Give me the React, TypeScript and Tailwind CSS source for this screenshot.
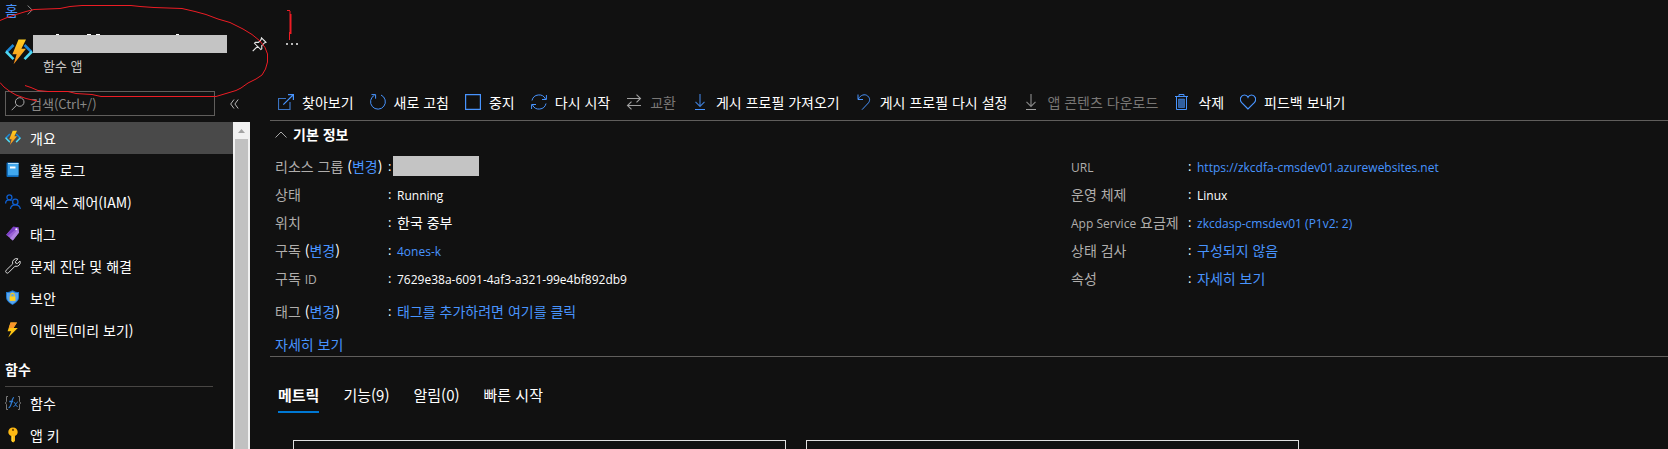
import type { ReactNode } from "react";

const KR = "font-['Noto_Sans_CJK_KR','Open_Sans',sans-serif]";

/** Sets Latin runs inside Korean text in the Latin face, one size smaller, so both scripts look even. */
function Mixed({ text }: { text: string }) {
  const parts = text.split(/([A-Za-z0-9](?:[A-Za-z0-9:/.\- (]*[A-Za-z0-9]\)?)?)/);
  return (
    <>
      {parts.map((part, i) =>
        i % 2 === 1 ? (
          <span key={i} className="font-['Open_Sans',sans-serif] text-xs">
            {part}
          </span>
        ) : (
          part
        ),
      )}
    </>
  );
}

function Svg({ children, size = 16, className = "" }: { children: ReactNode; size?: number; className?: string }) {
  return (
    <svg
      width={size}
      height={size}
      viewBox="0 0 16 16"
      fill="none"
      stroke="currentColor"
      className={"shrink-0 " + className}
      aria-hidden="true"
    >
      {children}
    </svg>
  );
}

function FunctionAppIcon({ size, id }: { size: number; id: string }) {
  return (
    <svg width={size} height={size} viewBox="0 0 28 28" className="shrink-0" aria-hidden="true">
      <defs>
        <linearGradient id={id} x1="0" y1="0" x2="0" y2="1">
          <stop offset="0" stopColor="#ffce1f" />
          <stop offset="1" stopColor="#f78d1e" />
        </linearGradient>
      </defs>
      <path d="M8.5 7 1.4 14.2" stroke="#1a87d8" strokeWidth="2.600" fill="none" />
      <path d="M1 13.5 8.5 21.2" stroke="#4fd8f2" strokeWidth="2.600" fill="none" />
      <path d="M19.5 7 26.6 14.2" stroke="#1a87d8" strokeWidth="2.600" fill="none" />
      <path d="M27 13.5 19.5 21.2" stroke="#4fd8f2" strokeWidth="2.600" fill="none" />
      <path d="M13.5 1.5H21L16.4 10.8H21L8.6 26.3 11.6 16.2H7.4Z" fill={`url(#${id})`} />
    </svg>
  );
}

const sideIcons = {
  app: <FunctionAppIcon size={16} id="boltSmall" />,
  log: (
    <Svg>
      <path d="M1.500 1.500a1 1 0 0 1 1-1h11v14.600h-11a1 1 0 0 1-1-1Z" fill="#0f6cbd" stroke="none" />
      <path d="M3 1h10.500v12.300H3Z" fill="#41a8ee" stroke="none" />
      <path d="M3 1h10.500v.8H3Z" fill="#d8ecfa" stroke="none" />
      <path d="M5 4.500h5.500v2H5Z" fill="#fff" stroke="none" />
    </Svg>
  ),
  iam: (
    <Svg className="text-[#0f5fd0]">
      <g strokeWidth="1.300">
        <circle cx="4.400" cy="3.300" r="2.500" />
        <path d="M.6 9.500C.6 7.200 2 5.900 4.200 5.900c1 0 1.700.3 2.300.8" />
        <circle cx="10.300" cy="7.900" r="2.700" />
        <path d="M5.500 15c.2-2.800 2-4.200 4.800-4.200s4.700 1.500 5 4.200" />
      </g>
    </Svg>
  ),
  tag: (
    <Svg>
      <path d="M8.300.8 13.500 1.200 14 6.600 7.800 14.600 1.200 8.800Z" fill="#9b62d9" stroke="none" />
      <path d="M8.300.8 13.500 1.200 2.600 10 1.200 8.800Z" fill="#7a3fc4" stroke="none" />
      <path d="M13.200 3 14 6.600 7.800 14.600 5 12.200Z" fill="#b083e4" stroke="none" />
      <circle cx="11.300" cy="3.300" r="1" fill="#fff" stroke="none" />
    </Svg>
  ),
  wrench: (
    <Svg className="text-[#d8d8d8]">
      <path d="M13 .9a4 4 0 0 0-5.300 5L1.200 12.200a1.600 1.600 0 0 0 2.400 2.400L10 8.200a4 4 0 0 0 5-5.200l-2.600 2.500-1.700-.4-.3-1.600Z" />
    </Svg>
  ),
  shield: (
    <Svg>
      <path d="M7.500.3C9.500 1.700 11.800 2 14 2.100v5c0 4-3.500 6.300-6.500 8-3-1.700-6.500-4-6.500-8v-5C3.200 2 5.500 1.700 7.500.3Z" fill="#1b78d0" stroke="none" />
      <path d="M7.500 1.400C9.300 2.500 11.200 2.900 13 3v4.200c0 3.300-2.900 5.300-5.500 6.800C4.900 12.500 2 10.500 2 7.200V3c1.800-.1 3.700-.5 5.500-1.600Z" fill="#58a5ef" stroke="none" />
      <path d="M5.700 6.500V5.200a1.800 1.800 0 0 1 3.600 0v1.300" stroke="#f5c518" strokeWidth="1.100" />
      <path d="M4.600 6.400h5.800v4.500H4.600Z" fill="#ffd01f" stroke="none" />
    </Svg>
  ),
  bolt: (
    <Svg>
      <path d="M5.500.5H12L8.500 6h4.300L3.300 15.600 6.200 9.200H2.600Z" fill="#fdc413" stroke="none" />
      <path d="M5.500.5H12L8.500 6H3.800Z" fill="#f9952a" stroke="none" />
    </Svg>
  ),
  fx: (
    <Svg>
      <path d="M3 1.500H1.500v5L.4 8l1.100 1.500v5H3M13 1.500h1.500v5L15.600 8l-1.100 1.500v5H13" stroke="#8c8c8c" strokeOpacity=".85" />
      <path d="M9 2.700C6.500 2.300 6.800 12.800 3.500 12.600M4.300 6.500h3.700" stroke="#2f7bd0" strokeWidth="1.300" />
      <path d="M8.700 7c1.800-.3 1.700 5 4 4.600M12.800 6.900c-1.500 0-2.600 4.800-4.400 4.700" stroke="#2f7bd0" />
    </Svg>
  ),
  key: (
    <Svg>
      <path d="M8 .4c2.700 0 4.700 2 4.700 4.500 0 1.900-1.100 3.300-2.700 4v5L8.200 15.600 6.500 14V9C4.600 8.300 3.300 6.900 3.300 4.900 3.300 2.400 5.300.4 8 .4Z" fill="#fdb913" stroke="none" />
      <path d="M6.500 9h1.600v6.300L6.500 14Z" fill="#ffd83a" stroke="none" />
      <circle cx="8" cy="2.900" r="1.100" fill="#7a4a00" stroke="none" />
    </Svg>
  ),
};

type MenuEntry = { label: string; icon: keyof typeof sideIcons; active?: boolean };

const menu: MenuEntry[] = [
  { label: "개요", icon: "app", active: true },
  { label: "활동 로그", icon: "log" },
  { label: "액세스 제어(IAM)", icon: "iam" },
  { label: "태그", icon: "tag" },
  { label: "문제 진단 및 해결", icon: "wrench" },
  { label: "보안", icon: "shield" },
  { label: "이벤트(미리 보기)", icon: "bolt" },
];

const functionMenu: MenuEntry[] = [
  { label: "함수", icon: "fx" },
  { label: "앱 키", icon: "key" },
];

function MenuList({ entries }: { entries: MenuEntry[] }) {
  return (
    <ul>
      {entries.map((e) => (
        <li key={e.label}>
          <a
            href="#"
            aria-current={e.active ? "page" : undefined}
            className={"flex h-8 items-center gap-[9px] pl-[5px] text-sm text-white " + (e.active ? "bg-[#494949]" : "")}
          >
            {sideIcons[e.icon]}
            <span>
              {e.label}
            </span>
          </a>
        </li>
      ))}
    </ul>
  );
}

const download = (
  <Svg>
    <path d="M8 0v12M3.500 7.800 8 12.300l4.500-4.500" strokeOpacity=".8" strokeWidth="1.200" />
    <path d="M3 15.500h10" />
  </Svg>
);

const commands: { label: string; icon: ReactNode; disabled?: boolean }[] = [
  {
    label: "찾아보기",
    icon: (
      <Svg>
        <path d="M8 4.500H.5v11h11.500V8" strokeOpacity=".75" strokeWidth="1.200" />
        <path d="M5.300 10.700 15 1M10 .6h5.400V6" strokeWidth="1.200" />
      </Svg>
    ),
  },
  {
    label: "새로 고침",
    icon: (
      <Svg>
        <path d="M11 1a7.400 7.400 0 1 1-6.500.2M1.500.6H5.600V4.700" />
      </Svg>
    ),
  },
  {
    label: "중지",
    icon: (
      <Svg>
        <path d="M.6.600h14.800v14.800H.6Z" strokeWidth="1.200" />
      </Svg>
    ),
  },
  {
    label: "다시 시작",
    icon: (
      <Svg>
        <path d="M1 6.500A7.200 7.200 0 0 1 14.500 5M15.400 1v4.500H11M15 9.500A7.200 7.200 0 0 1 1.500 11M.6 15v-4.500H5" />
      </Svg>
    ),
  },
  {
    label: "교환",
    disabled: true,
    icon: (
      <Svg>
        <path d="M1 4.500h13.500M10.500.7l4 3.800-4 3.800M15 11.500H1.500M5.500 7.700l-4 3.800 4 3.800" strokeWidth="1.100" />
      </Svg>
    ),
  },
  { label: "게시 프로필 가져오기", icon: download },
  {
    label: "게시 프로필 다시 설정",
    icon: (
      <Svg>
        <path d="M2 .5v5h5M2.300 5.200C4.300.8 9-.4 11.700 2c2.600 2.300 2.300 5 .6 7L6 15.700" />
      </Svg>
    ),
  },
  { label: "앱 콘텐츠 다운로드", icon: download, disabled: true },
  {
    label: "삭제",
    icon: (
      <Svg>
        <path d="M5 2V.5h5V2M1 2.500h13" />
        <path d="M2.500 2.500v13h10v-13" />
        <path d="M4.500 5h6v8.500h-6Z" fill="currentColor" fillOpacity=".6" strokeOpacity=".5" />
      </Svg>
    ),
  },
  {
    label: "피드백 보내기",
    icon: (
      <Svg>
        <path d="M8 15 1.700 8.700C-1.300 5.200 1.300 1 4.500 1 6.300 1 7.500 2.200 8 3.300 8.500 2.200 9.700 1 11.500 1c3.200 0 5.800 4.200 2.800 7.700Z" strokeWidth="1.200" />
      </Svg>
    ),
  },
];

type Info = { label: string; change?: boolean; value?: string; link?: boolean; spaced?: boolean };

const leftInfo: Info[] = [
  { label: "리소스 그룹", change: true },
  { label: "상태", value: "Running" },
  { label: "위치", value: "한국 중부" },
  { label: "구독", change: true, value: "4ones-k", link: true },
  { label: "구독 ID", value: "7629e38a-6091-4af3-a321-99e4bf892db9" },
  { label: "태그", change: true, value: "태그를 추가하려면 여기를 클릭", link: true, spaced: true },
];

const rightInfo: Info[] = [
  { label: "URL", value: "https://zkcdfa-cmsdev01.azurewebsites.net", link: true },
  { label: "운영 체제", value: "Linux" },
  { label: "App Service 요금제", value: "zkcdasp-cmsdev01 (P1v2: 2)", link: true },
  { label: "상태 검사", value: "구성되지 않음", link: true },
  { label: "속성", value: "자세히 보기", link: true },
];

function InfoList({ items, labelClass }: { items: Info[]; labelClass: string }) {
  return (
    <dl className="text-sm whitespace-nowrap">
      {items.map((it) => (
        <div key={it.label} className={"flex h-7 items-center " + (it.spaced ? "mt-[5px]" : "")}>
          <dt className={"text-[#b0aeac] " + labelClass}>
            <Mixed text={it.label} />
            {it.change && (
              <span className="text-white">
                {" ("}
                <a href="#" className="text-[#4894fe]">
                  변경
                </a>
                )
              </span>
            )}
          </dt>
          <span className="w-[5px] font-['Open_Sans',sans-serif] text-[13px]">:</span>
          {it.value === undefined ? (
            <dd className="h-5 w-[86px] bg-[#c4c4c4]" />
          ) : (
            <dd className="px-1">
              {it.link ? (
                <a href="#" className="text-[#4894fe]">
                  <Mixed text={it.value} />
                </a>
              ) : (
                <Mixed text={it.value} />
              )}
            </dd>
          )}
        </div>
      ))}
    </dl>
  );
}

const tabs = ["메트릭", "기능(9)", "알림(0)", "빠른 시작"];

export default function App() {
  return (
    <div lang="ko" className={"relative flex h-screen flex-col overflow-hidden bg-[#111] text-white " + KR}>
      <header className="pb-[10px] pl-[5px]">
        <nav className="flex h-5 items-center gap-[9px] text-sm" aria-label="탐색 경로">
          <a href="#" className="text-[#4894fe]">
            홈
          </a>
          <svg width="6" height="10" viewBox="0 0 6 10" fill="none" stroke="#8a8a8a" aria-hidden="true">
            <path d="M.6.500 5.200 5 .6 9.500" />
          </svg>
        </nav>
        <div className="flex pt-[14px]">
          <div className="pt-1">
            <FunctionAppIcon size={28} id="boltLarge" />
          </div>
          <div>
            <div className="flex items-center">
              <svg width="194" height="20" viewBox="0 0 194 20" aria-hidden="true">
                <path d="M23 0h3v1h-3ZM54 0h4v1h-4ZM63 0h4v1h-4ZM143 0h3v1h-3Z" fill="#fff" />
                <rect y="1" width="194" height="18" fill="#c4c4c4" />
              </svg>
              <button type="button" aria-label="고정" className="ml-[25px]">
                <svg width="15" height="15" viewBox="0 0 15 15" fill="none" stroke="#e6e6e6" strokeWidth="1.100" aria-hidden="true">
                  <path d="M9.500.8 14 5.300l-1.300.4-3 3 .1 3-1 .9L2.500 6.300l.9-1 3.100.1 2.700-3ZM5.500 9.400.7 14.200" />
                </svg>
              </button>
              <button type="button" aria-label="더 보기" className="ml-[19px]">
                <svg width="12" height="3" viewBox="0 0 12 3" fill="#b8b8b8" aria-hidden="true">
                  <path d="M0 0h2v2H0ZM5 0h2v2H5ZM10 0h2v2h-2Z" />
                </svg>
              </button>
            </div>
            <p className="pt-[2px] pl-[10px] text-[13px] leading-5 text-[#c8c6c4]">함수 앱</p>
          </div>
        </div>
      </header>

      <div className="flex min-h-0 flex-1">
        <aside className="flex w-[250px] shrink-0 flex-col">
          <div className="flex items-center gap-[15px] pt-[5px] pb-[6px] pl-[5px]">
            <label className="flex h-[25px] w-[210px] items-center border border-[#605e5c] pl-[5px]">
              <svg width="14" height="14" viewBox="0 0 14 14" fill="none" stroke="#a8a8a8" aria-hidden="true">
                <circle cx="8.700" cy="5" r="4.300" />
                <path d="M5.600 8.200.7 13.200" />
              </svg>
              <input
                type="text"
                aria-label="검색"
                placeholder="검색(Ctrl+/)"
                className="ml-[5px] min-w-0 flex-1 bg-transparent text-[13px] leading-5 outline-none placeholder:text-[#8a8886]"
              />
            </label>
            <button type="button" aria-label="메뉴 축소">
              <svg width="9" height="10" viewBox="0 0 9 10" fill="none" stroke="#b8b8b8" aria-hidden="true">
                <path d="M4 .5.700 5 4 9.500M8.200.5 4.900 5l3.300 4.500" />
              </svg>
            </button>
          </div>
          <div className="flex min-h-0 flex-1 overflow-hidden">
            <div className="min-w-0 flex-1">
              <MenuList entries={menu} />
              <h2 className="mt-[6px] mr-5 ml-[5px] flex h-[35px] items-center border-b border-[#484644] text-sm font-bold">
                함수
              </h2>
              <MenuList entries={functionMenu} />
            </div>
            <div className="flex w-[17px] flex-col items-center bg-[#f1f1f1]" aria-hidden="true">
              <div className="flex h-[17px] shrink-0 items-center">
                <svg width="7" height="4" viewBox="0 0 7 4" fill="#a3a3a3">
                  <path d="M3.500 0 7 4H0Z" />
                </svg>
              </div>
              <div className="w-[13px] flex-1 bg-[#c1c1c1]" />
            </div>
          </div>
        </aside>

        <main className="ml-5 min-w-0 flex-1">
          <div className="flex h-[35px] items-center gap-4 border-b border-[#605e5c] pb-[2px] pl-2" role="toolbar">
            {commands.map((c) => (
              <button
                key={c.label}
                type="button"
                disabled={c.disabled}
                className={
                  "flex shrink-0 items-center gap-2 text-sm whitespace-nowrap " +
                  (c.disabled ? "text-[#797775]" : "text-white")
                }
              >
                <span className={c.disabled ? "text-[#a0a0a0]" : "text-[#4894fe]"}>{c.icon}</span>
                {c.label}
              </button>
            ))}
          </div>

          <section className="border-b border-[#605e5c]">
            <button type="button" className="flex h-[26px] items-center gap-[6px] pl-[5px] text-sm font-bold">
              <svg width="12" height="7" viewBox="0 0 12 7" fill="none" stroke="#a8a8a8" aria-hidden="true">
                <path d="M.5 6.500 6 1l5.500 5.500" />
              </svg>
              기본 정보
            </button>
            <div className="grid grid-cols-[4fr_3fr] pt-[5px] pl-[5px]">
              <InfoList items={leftInfo} labelClass="w-[113px]" />
              <InfoList items={rightInfo} labelClass="w-[117px]" />
            </div>
            <a href="#" className="mt-[6px] ml-[5px] flex h-[25px] items-center text-sm text-[#4894fe]">
              자세히 보기
            </a>
          </section>

          <div className="mt-[22px] flex gap-6 pl-2" role="tablist">
            {tabs.map((t, i) => (
              <button
                key={t}
                type="button"
                role="tab"
                aria-selected={i === 0}
                className={
                  "h-[34px] border-b-2 text-[15px] " + (i === 0 ? "border-[#0078d4] font-bold" : "border-transparent")
                }
              >
                {t}
              </button>
            ))}
          </div>

          <div className="mt-[27px] flex gap-5 pl-[23px]">
            <div className="h-40 w-[493px] border border-[#e0e0e0]" />
            <div className="h-40 w-[493px] border border-[#e0e0e0]" />
          </div>
        </main>
      </div>

      <svg
        className="pointer-events-none absolute top-0 left-0"
        width="300"
        height="110"
        viewBox="0 0 300 110"
        fill="none"
        stroke="#ed1c24"
        aria-hidden="true"
      >
        <path d="M0 20.500 6 18 16 14.500 26 11.500 34 9.500 60 8.500 70 6.500 82 5.500H131L140 6.500 154 7.500 182 8.500 195 11.500 206 14.500 218 19 230 22.500 243 29 252 34.500 260 41 265 47.500 267.500 54V62L265.500 69 262 75 256 79 248 83 241 88 236 90.500 226 93.500 216 96.500H101L92 94.500 76 93.500 68 91.500H48L38 90.500 31 87.500 25 85.500" />
        <path d="M0 82.500 4 87 10 91.500 16 95 26 98.500 37 101" />
        <path d="M287 10.500h3M290 11v3M289.500 32v8" />
        <path d="M290.500 14v20" strokeWidth="2" />
      </svg>
    </div>
  );
}
